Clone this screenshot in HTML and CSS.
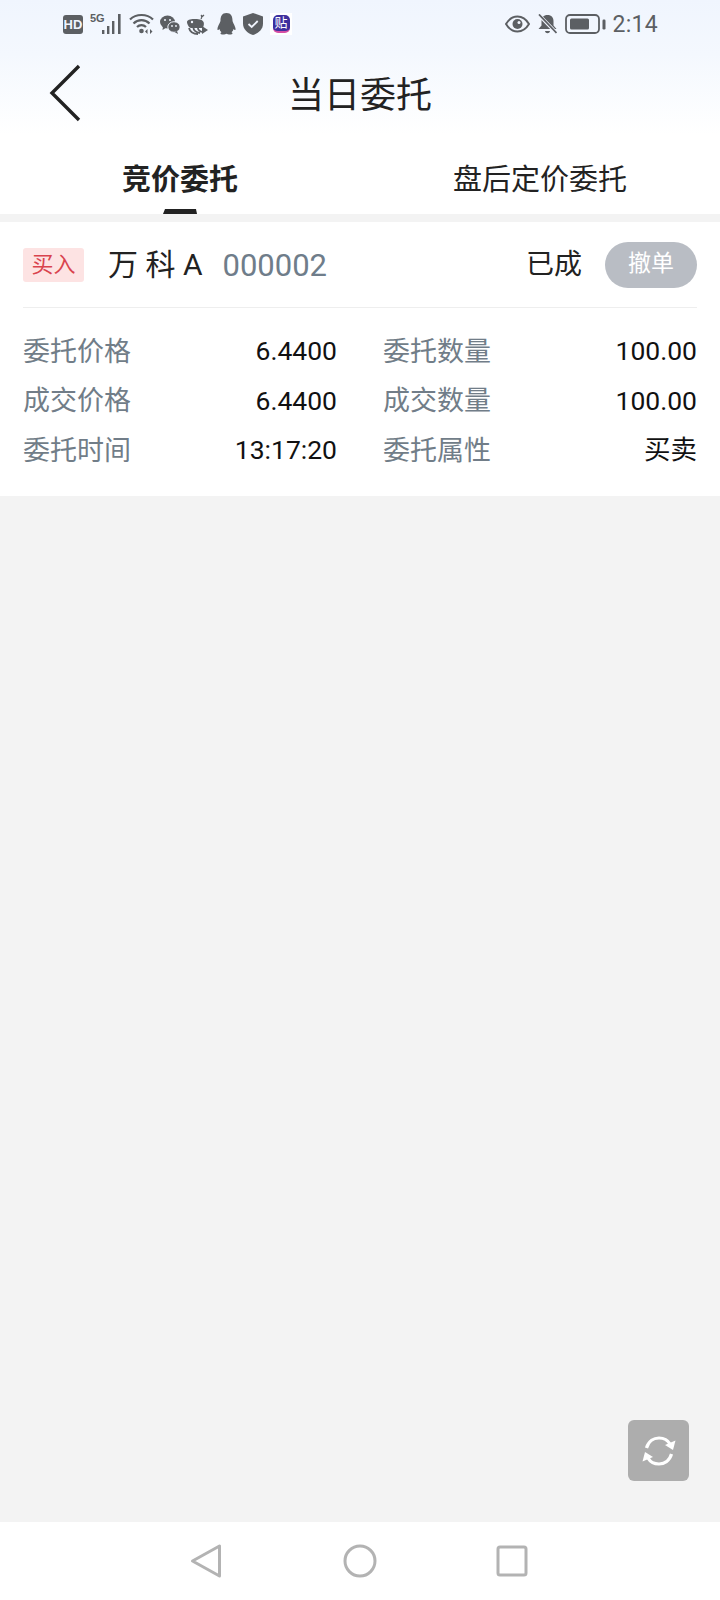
FILE: index.html
```html
<!DOCTYPE html>
<html lang="zh-CN">
<head>
<meta charset="utf-8">
<title>当日委托</title>
<link rel="stylesheet" href="styles.css">
</head>
<body>
<div class="app">
  <header class="top">
    <div class="status">
      <div class="status-left">
        <svg class="i-hd" width="20" height="19" viewBox="0 0 20 19"><rect width="20" height="19" rx="3" fill="#5c5f63"/><text x="10" y="14" class="hd-text" text-anchor="middle">HD</text></svg>
        <svg class="i-sig" width="33" height="21" viewBox="0 0 33 21"><text x="0" y="9" class="g5">5G</text><g fill="#5c5f63"><rect x="12" y="17" width="2.400" height="4"/><rect x="17" y="13" width="2.400" height="8"/><rect x="22" y="8" width="2.400" height="13"/><rect x="28" y="1" width="2.600" height="20"/></g></svg>
        <svg class="i-wifi" width="25" height="21" viewBox="0 0 25 21"><g fill="none" stroke="#5c5f63" stroke-width="2.200"><path d="M1 6.500C7 .5 18 .5 24 6.500"/><path d="M4.500 10.500C9 6 16 6 20.500 10.500"/><path d="M8 14c2.500-2.500 6.500-2.500 9 0"/></g><circle cx="12.500" cy="18" r="2.300" fill="#5c5f63"/><path d="M18.500 16v5l-2.500-2.500zM21 16v5l2.500-2.500z" fill="#5c5f63"/></svg>
        <svg class="i-wc" width="20" height="19" viewBox="0 0 20 19"><ellipse cx="7.500" cy="7" rx="7.500" ry="6.500" fill="#5c5f63"/><path d="M3 11l-.5 4 4-2.500z" fill="#5c5f63"/><ellipse cx="14" cy="12" rx="6.200" ry="5.300" fill="#5c5f63" stroke="#f1f5fe" stroke-width="1"/><path d="M17 16l1 3-3.500-2z" fill="#5c5f63"/><g fill="#f1f5fe"><circle cx="5" cy="5" r="1"/><circle cx="10" cy="5" r="1"/><circle cx="12" cy="11" r=".9"/><circle cx="16" cy="11" r=".9"/></g></svg>
        <svg class="i-whale" width="21" height="21" viewBox="0 0 21 21"><path d="M0 8c0-2 3-3 7-3s8 0 9.500 3c1 2 0 6-2 6H4C2 14 0 10 0 8z" fill="#5c5f63"/><path d="M14 5c1-1.500 1-3 0-4M14 3c1 0 2-1 3-2" fill="none" stroke="#5c5f63" stroke-width="1.200"/><circle cx="5" cy="8" r="1.200" fill="#f1f5fe"/><g fill="none" stroke="#5c5f63" stroke-width="1.800"><path d="M2 14c1 4 4 6 9 6"/><path d="M6.500 14c0 2 2 4 6.500 5"/><path d="M11 14c0 2 1 3 4 4"/></g><path d="M15 12l6 4-6 4z" fill="#5c5f63"/></svg>
        <svg class="i-qq" width="19" height="22" viewBox="0 0 19 22"><path d="M9.500 0C5 0 3.500 3.500 3.500 7.500c0 1.500-2.500 5-3 8-.3 2 .8 2 2 .5.3 1.500 1 2.500 2 3.200C3 20 3 21.500 6 21.500c1.700 0 2.800-.5 3.500-.8.700.3 1.800.8 3.500.8 3 0 3-1.500 1.500-2.300 1-.7 1.700-1.700 2-3.200 1.200 1.500 2.300 1.500 2-.5-.5-3-3-6.500-3-8C15.500 3.500 14 0 9.500 0z" fill="#5c5f63"/></svg>
        <svg class="i-sh" width="20" height="22" viewBox="0 0 20 22"><path d="M10 0l10 3.500v7c0 5.500-4 9.500-10 11.500C4 20 0 16 0 10.500v-7z" fill="#5c5f63"/><path d="M5.500 11l3.200 3 6-6" fill="none" stroke="#f1f5fe" stroke-width="1.800"/></svg>
        <div class="tie"><span class="tie-in">贴</span></div>
      </div>
      <div class="status-right">
        <svg width="25" height="18" viewBox="0 0 25 18"><path d="M1 9C4 4 8 1.500 12.500 1.500S21 4 24 9c-3 5-7 7.500-11.500 7.500S4 14 1 9z" fill="none" stroke="#5c5f63" stroke-width="2"/><circle cx="12.500" cy="9" r="5" fill="#5c5f63"/><circle cx="14" cy="7.500" r="1.500" fill="#f1f5fe"/></svg>
        <svg width="19" height="20" viewBox="0 0 19 20"><path d="M9.500 1c4 0 6 2.500 6 6.500v4l3 3.500H.5l3-3.500v-4c0-4 2-6.500 6-6.500z" fill="#5c5f63"/><path d="M7 17h5c-.5 3-4.500 3-5 0z" fill="#5c5f63"/><path d="M1 1l17.500 18" stroke="#f1f5fe" stroke-width="3.500"/><path d="M1 .5l17.500 18.500" stroke="#5c5f63" stroke-width="1.800"/></svg>
        <svg class="i-bat" width="41" height="20" viewBox="0 0 41 20"><rect x="1" y="1" width="33" height="18" rx="4" fill="none" stroke="#5c5f63" stroke-width="1.800"/><rect x="5" y="4.500" width="19" height="11" rx="1.500" fill="#5c5f63"/><rect x="37.500" y="5.500" width="3" height="10" rx="1.200" fill="#5c5f63"/></svg>
        <span class="clock">2:14</span>
      </div>
    </div>
    <div class="navbar">
      <svg class="back" width="32" height="58" viewBox="0 0 32 58"><path d="M30 2L3 29l27 27" fill="none" stroke="#222" stroke-width="3.400"/></svg>
      <h1 class="title">当日委托</h1>
      <span></span>
    </div>
  </header>

  <nav class="tabs">
    <div class="tab tab-active"><span class="tab-label">竞价委托</span><svg class="tab-mark" width="34" height="5" viewBox="0 0 34 5"><path d="M2 0h31l1 5H0z" fill="#222"/></svg></div>
    <div class="tab"><span class="tab-label">盘后定价委托</span></div>
  </nav>

  <main class="content">
    <section class="card">
      <div class="card-head">
        <span class="tag">买入</span>
        <span class="name">万 科 A</span>
        <span class="code">000002</span>
        <span class="state">已成</span>
        <span class="cancel">撤单</span>
      </div>
      <div class="grid">
        <div class="row"><span class="lab">委托价格</span><span class="val">6.4400</span></div>
        <div class="row"><span class="lab">委托数量</span><span class="val">100.00</span></div>
        <div class="row"><span class="lab">成交价格</span><span class="val">6.4400</span></div>
        <div class="row"><span class="lab">成交数量</span><span class="val">100.00</span></div>
        <div class="row"><span class="lab">委托时间</span><span class="val">13:17:20</span></div>
        <div class="row"><span class="lab">委托属性</span><span class="val">买卖</span></div>
      </div>
    </section>
    <div class="refresh">
      <svg width="36" height="36" viewBox="0 0 36 36"><g fill="none" stroke="#fff" stroke-width="3.200"><path d="M5.500 15C7.500 8 13 5 18 5c5 0 9 2.500 11 6"/><path d="M30.500 21C28.500 28 23 31 18 31c-5 0-9-2.500-11-6"/></g><path d="M34.500 7.500L32 17l-8-5z" fill="#fff"/><path d="M1.500 28.500L4 19l8 5z" fill="#fff"/></svg>
    </div>
  </main>

  <footer class="sysnav">
    <svg width="32" height="36" viewBox="0 0 32 36"><path d="M29.500 3v30L2.500 18z" fill="none" stroke="#b3b3b3" stroke-width="3" stroke-linejoin="round"/></svg>
    <svg width="34" height="34" viewBox="0 0 34 34"><circle cx="17" cy="17" r="15" fill="none" stroke="#b3b3b3" stroke-width="3"/></svg>
    <svg width="32" height="32" viewBox="0 0 32 32"><rect x="2" y="2" width="28" height="28" rx="2" fill="none" stroke="#b3b3b3" stroke-width="3"/></svg>
  </footer>
</div>
</body>
</html>
```

FILE: styles.css
```css
* { box-sizing: border-box; }
html, body { margin: 0; padding: 0; }
body {
  font-family: Roboto, "Noto Sans CJK SC", sans-serif;
  color: #222;
  background: #f3f3f3;
}
.app {
  width: 720px;
  height: 1600px;
  display: flex;
  flex-direction: column;
  overflow: hidden;
}
.top {
  height: 135px;
  background: linear-gradient(#f0f5fe 0%, #f4f8fe 40%, #ffffff 100%);
}
.status {
  height: 50px;
  padding: 13px 62px 0 63px;
  display: flex;
  justify-content: space-between;
  align-items: flex-start;
}
.status-left { display: flex; align-items: flex-start; gap: 7px; }
.status-right { display: flex; align-items: flex-start; gap: 8px; }
.status svg { display: block; }
.i-hd, .i-wc { margin-top: 2px; }
.i-whale { margin-top: 1px; }
.i-qq { margin-left: 2px; }
.i-sig { margin-right: -1px; }
.i-wifi { margin-right: -1px; }
.hd-text { font: 700 13px "Liberation Sans", sans-serif; fill: #f1f5fe; }
.g5 { font: 700 11px "Liberation Sans", sans-serif; fill: #5c5f63; }
.tie {
  width: 22px;
  height: 22px;
  background: #fff;
  display: flex;
  align-items: center;
  justify-content: center;
}
.tie-in {
  width: 17px;
  height: 18px;
  border-radius: 5px;
  background: #3d2f9e;
  border-bottom: 2px solid #d64fa5;
  color: #fff;
  font-size: 13px;
  line-height: 16px;
  text-align: center;
}
.i-bat { margin-top: 1px; }
.status-right svg:first-child { margin-top: 2px; }
.status-right svg:nth-child(2) { margin-top: 1px; }
.clock {
  font-size: 23px;
  line-height: 24px;
  color: #5c5f63;
  margin-left: -2px;
  letter-spacing: .3px;
}
.navbar {
  height: 85px;
  padding: 0 0 0 49px;
  display: grid;
  grid-template-columns: 1fr auto 1fr;
  align-items: start;
}
.back { display: block; margin-top: 14px; }
.title {
  margin: 22px 0 0 -49px;
  font-size: 36px;
  line-height: 48px;
  font-weight: 400;
  color: #222;
}
.tabs {
  height: 79px;
  display: flex;
  background: #fff;
}
.tab {
  flex: 1;
  display: flex;
  flex-direction: column;
  align-items: center;
  position: relative;
}
.tab-label {
  margin-top: 25px;
  font-size: 29px;
  line-height: 40px;
  color: #222;
}
.tab-active .tab-label { font-weight: 700; }
.tab-mark { display: block; margin-top: 9px; }
.content {
  flex: 1;
  padding-top: 8px;
  position: relative;
}
.card {
  height: 274px;
  padding: 0 23px;
  background: #fff;
}
.card-head {
  height: 86px;
  display: flex;
  align-items: center;
  border-bottom: 1px solid #eeeeee;
}
.tag {
  width: 61px;
  height: 34px;
  border-radius: 3px;
  background: #fde3e3;
  color: #d9434e;
  font-size: 22px;
  line-height: 33px;
  text-align: center;
}
.name {
  margin-left: 24px;
  font-size: 30px;
  line-height: 40px;
  color: #222;
  margin-top: 1px;
  white-space: pre;
}
.code {
  margin-left: 20px;
  font-size: 31px;
  line-height: 40px;
  color: #6f7d8a;
  margin-top: 3px;
}
.state {
  margin-left: auto;
  font-size: 28px;
  line-height: 40px;
  color: #222;
  margin-top: 1px;
}
.cancel {
  margin-left: 23px;
  width: 92px;
  height: 46px;
  border-radius: 23px;
  background: #b9bdc4;
  color: #fff;
  font-size: 23px;
  line-height: 44px;
  text-align: center;
  margin-top: 1px;
}
.grid {
  padding-top: 19px;
  display: grid;
  grid-template-columns: 314px 314px;
  column-gap: 46px;
  grid-auto-rows: 49.500px;
}
.row {
  display: flex;
  justify-content: space-between;
  align-items: center;
}
.lab { font-size: 27px; color: #717d88; line-height: 40px; }
.val { font-size: 26.500px; color: #111; line-height: 38px; margin-bottom: 1px; }
.refresh {
  position: absolute;
  left: 628px;
  top: 1206px;
  width: 61px;
  height: 61px;
  border-radius: 6px;
  background: #adadad;
  display: flex;
  align-items: center;
  justify-content: center;
}
.sysnav {
  height: 78px;
  background: #fff;
  display: flex;
  align-items: flex-start;
  padding: 21px 0 0 190px;
}
.sysnav svg { display: block; }
.sysnav svg:nth-child(2) { margin: 1px 0 0 121px; }
.sysnav svg:nth-child(3) { margin: 2px 0 0 119px; }
```
